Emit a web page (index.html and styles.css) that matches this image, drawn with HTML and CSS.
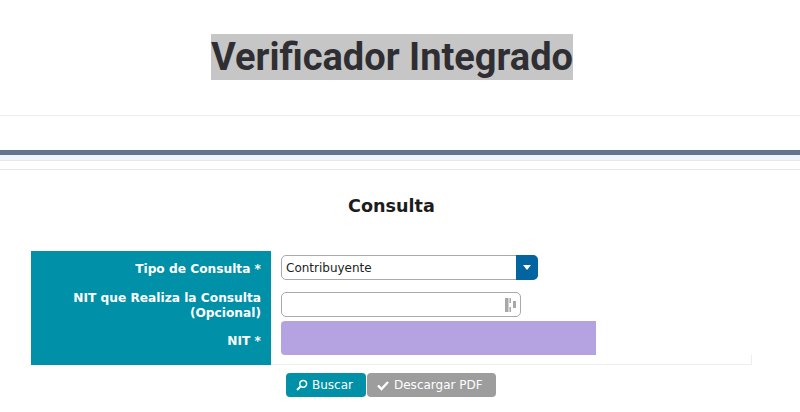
FILE: index.html
```html
<!DOCTYPE html>
<html lang="es">
<head>
  <meta charset="UTF-8" />
  <title>Verificador Integrado</title>
  <link rel="stylesheet" href="styles.css">
</head>
<body>

<header class="cabecera">
  <h1><span class="marcado">Verificador Integrado</span></h1>
</header>

<div class="franja"></div>

<main class="contenido">
  <h2>Consulta</h2>

  <div class="formulario">
    <div class="etiquetas">
      <label class="fila-tipo">Tipo de Consulta *</label>
      <label class="fila-nit-opc">NIT que Realiza la Consulta (Opcional)</label>
      <label class="fila-nit">NIT *</label>
    </div>
    <div class="campos">
      <div class="combo">
        <span class="combo-texto">Contribuyente</span>
        <span class="combo-flecha"></span>
      </div>
      <div class="entrada">
        <svg width="11" height="14" viewBox="0 0 11 14" fill="#a8a8a8">
          <rect x="0" y="0" width="3.5" height="14"/>
          <rect x="4.5" y="0" width="1.5" height="5"/>
          <rect x="4.5" y="9" width="1.5" height="5"/>
          <rect x="8" y="3" width="3" height="7"/>
        </svg>
      </div>
      <div class="oculto"></div>
    </div>
  </div>

  <div class="botones">
    <button class="btn buscar">
      <svg width="12" height="12" viewBox="0 0 12 12" fill="none" stroke="#fff" stroke-width="1.5">
        <circle cx="7.2" cy="4.8" r="3.4"/>
        <path d="M4.6 7.4 1 11" stroke-width="2"/>
      </svg>
      Buscar
    </button>
    <button class="btn descargar">
      <svg width="12" height="12" viewBox="0 0 12 12" fill="none" stroke="#fff" stroke-width="2.4">
        <path d="M1 6.5 4.5 10 11 3"/>
      </svg>
      Descargar PDF
    </button>
  </div>
</main>

</body>
</html>
```

FILE: styles.css
```css
body {
  margin: 0;
  font-family: "DejaVu Sans", sans-serif;
  background: #fff;
  color: #1f1f1f;
}
.cabecera {
  height: 115px;
  border-bottom: 1px solid #eeeeee;
  text-align: center;
}
h1 {
  margin: 0;
  padding-top: 34px;
  font-family: Roboto, sans-serif;
  font-size: 38px;
  font-weight: 700;
  line-height: 46px;
  color: #2f2f33;
}
.marcado {
  display: inline-block;
  background: #c6c6c6;
  margin-left: -16px;
}
.franja {
  margin-top: 34px;
  height: 5px;
  background: #66728f;
  border-bottom: 5px solid #f0f5fa;
  box-shadow: 0 1px 0 #e8e8e8;
}
.contenido {
  margin-top: 9px;
  border-top: 1px solid #e6e6e6;
}
h2 {
  margin: 0;
  padding-top: 25px;
  padding-left: 348px;
  font-size: 17.6px;
  line-height: 22px;
  font-weight: 700;
  color: #1c1c1c;
}
.formulario {
  position: relative;
  display: flex;
  width: 721px;
  height: 113px;
  margin: 34px 0 0 31px;
  border-bottom: 1px solid #eeeeee;
}
.formulario::after {
  content: "";
  position: absolute;
  right: 0;
  bottom: 0;
  width: 1px;
  height: 9px;
  background: #eeeeee;
}
.etiquetas {
  width: 240px;
  margin-bottom: -1px;
  box-sizing: border-box;
  padding-right: 10px;
  background: #0090a8;
  color: #fff;
  font-size: 12.2px;
  font-weight: 700;
  line-height: 15px;
  text-align: right;
  display: flex;
  flex-direction: column;
}
.fila-tipo {
  padding-top: 11px;
}
.fila-nit-opc {
  padding-top: 14px;
}
.fila-nit {
  padding-top: 13px;
}
.campos {
  padding: 4px 0 0 10px;
  display: flex;
  flex-direction: column;
  align-items: flex-start;
}
.combo {
  width: 257px;
  height: 25px;
  box-sizing: border-box;
  display: flex;
  border: 1px solid #a9a9a9;
  border-radius: 5px;
  font-size: 12px;
  line-height: 25px;
}
.combo-texto {
  flex: 1;
  padding-left: 4px;
  color: #222;
}
.combo-flecha {
  width: 22px;
  margin: -1px;
  background: #02659f;
  border-radius: 0 5px 5px 0;
  position: relative;
}
.combo-flecha::after {
  content: "";
  position: absolute;
  left: 7px;
  top: 10px;
  border: 4px solid transparent;
  border-top: 5px solid #fff;
  border-bottom: 0;
}
.entrada {
  width: 240px;
  height: 25px;
  margin-top: 12px;
  box-sizing: border-box;
  display: flex;
  align-items: center;
  justify-content: flex-end;
  padding-right: 4px;
  border: 1px solid #a9a9a9;
  border-radius: 5px;
}
.oculto {
  width: 315px;
  height: 34px;
  margin-top: 4px;
  background: #b4a3e0;
  border-radius: 4px 0 0 4px;
}
.botones {
  display: flex;
  gap: 1px;
  margin: 8px 0 0 286px;
}
.btn {
  height: 24px;
  display: flex;
  align-items: center;
  gap: 4px;
  padding: 0 10px;
  border: none;
  border-radius: 4px;
  color: #fff;
  font-family: "DejaVu Sans", sans-serif;
  font-size: 12px;
}
.buscar {
  width: 80px;
  background: #0090a8;
}
.descargar {
  width: 129px;
  gap: 5px;
  background: #9d9d9d;
}
```
